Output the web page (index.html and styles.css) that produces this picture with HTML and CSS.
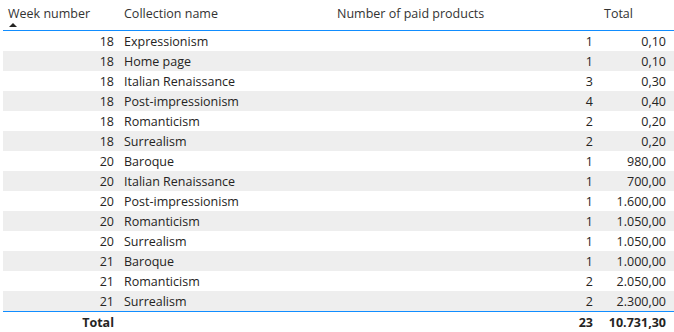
FILE: index.html
```html
<!DOCTYPE html>
<html>
<head>
<meta charset="utf-8">
<link rel="stylesheet" href="styles.css">
</head>
<body>
<div class="table">
  <div class="row head">
    <div class="cell c1"><span>Week number</span><span class="sort"></span></div>
    <div class="cell c2">Collection name</div>
    <div class="cell c3">Number of paid products</div>
    <div class="cell c4">Total</div>
  </div>
  <div class="row"><div class="cell c1 num">18</div><div class="cell c2">Expressionism</div><div class="cell c3 num">1</div><div class="cell c4 num">0,10</div></div>
  <div class="row alt"><div class="cell c1 num">18</div><div class="cell c2">Home page</div><div class="cell c3 num">1</div><div class="cell c4 num">0,10</div></div>
  <div class="row"><div class="cell c1 num">18</div><div class="cell c2">Italian Renaissance</div><div class="cell c3 num">3</div><div class="cell c4 num">0,30</div></div>
  <div class="row alt"><div class="cell c1 num">18</div><div class="cell c2">Post-impressionism</div><div class="cell c3 num">4</div><div class="cell c4 num">0,40</div></div>
  <div class="row"><div class="cell c1 num">18</div><div class="cell c2">Romanticism</div><div class="cell c3 num">2</div><div class="cell c4 num">0,20</div></div>
  <div class="row alt"><div class="cell c1 num">18</div><div class="cell c2">Surrealism</div><div class="cell c3 num">2</div><div class="cell c4 num">0,20</div></div>
  <div class="row"><div class="cell c1 num">20</div><div class="cell c2">Baroque</div><div class="cell c3 num">1</div><div class="cell c4 num">980,00</div></div>
  <div class="row alt"><div class="cell c1 num">20</div><div class="cell c2">Italian Renaissance</div><div class="cell c3 num">1</div><div class="cell c4 num">700,00</div></div>
  <div class="row"><div class="cell c1 num">20</div><div class="cell c2">Post-impressionism</div><div class="cell c3 num">1</div><div class="cell c4 num">1.600,00</div></div>
  <div class="row alt"><div class="cell c1 num">20</div><div class="cell c2">Romanticism</div><div class="cell c3 num">1</div><div class="cell c4 num">1.050,00</div></div>
  <div class="row"><div class="cell c1 num">20</div><div class="cell c2">Surrealism</div><div class="cell c3 num">1</div><div class="cell c4 num">1.050,00</div></div>
  <div class="row alt"><div class="cell c1 num">21</div><div class="cell c2">Baroque</div><div class="cell c3 num">1</div><div class="cell c4 num">1.000,00</div></div>
  <div class="row"><div class="cell c1 num">21</div><div class="cell c2">Romanticism</div><div class="cell c3 num">2</div><div class="cell c4 num">2.050,00</div></div>
  <div class="row alt last"><div class="cell c1 num">21</div><div class="cell c2">Surrealism</div><div class="cell c3 num">2</div><div class="cell c4 num">2.300,00</div></div>
  <div class="row total"><div class="cell c1 num">Total</div><div class="cell c2"></div><div class="cell c3 num">23</div><div class="cell c4 num">10.731,30</div></div>
</div>
</body>
</html>
```

FILE: styles.css
```css
html, body {
  margin: 0;
  padding: 0;
  background: #ffffff;
}
body {
  font-family: "Open Sans", "Noto Sans", sans-serif;
  font-size: 12.5px;
  color: #252423;
}
.table {
  margin-left: 3px;
  width: 671px;
}
.row {
  display: grid;
  grid-template-columns: 116px 213px 266px 76px;
  height: 20px;
}
.row.alt {
  background: #eeeeee;
}
.row.head {
  border-bottom: 1px solid #118dff;
  box-sizing: border-box;
  height: 31px;
  color: #333333;
}
.row.head .cell {
  padding-top: 4px;
  position: relative;
}
.cell {
  padding: 1px 5px 0;
  white-space: nowrap;
  line-height: 19px;
}
.cell.c4 {
  padding-right: 8px;
}
.num {
  text-align: right;
}
.head .cell {
  text-align: left;
}
.head .c4 {
  padding-left: 6px;
}
.sort {
  position: absolute;
  left: 6px;
  top: 23px;
  width: 0;
  height: 0;
  border-left: 4px solid transparent;
  border-right: 4px solid transparent;
  border-bottom: 4px solid #252423;
}
.row.last {
  border-bottom: 1px solid #118dff;
  height: 21px;
  box-sizing: border-box;
}
.row.total {
  font-weight: bold;
  height: 21px;
}
```
